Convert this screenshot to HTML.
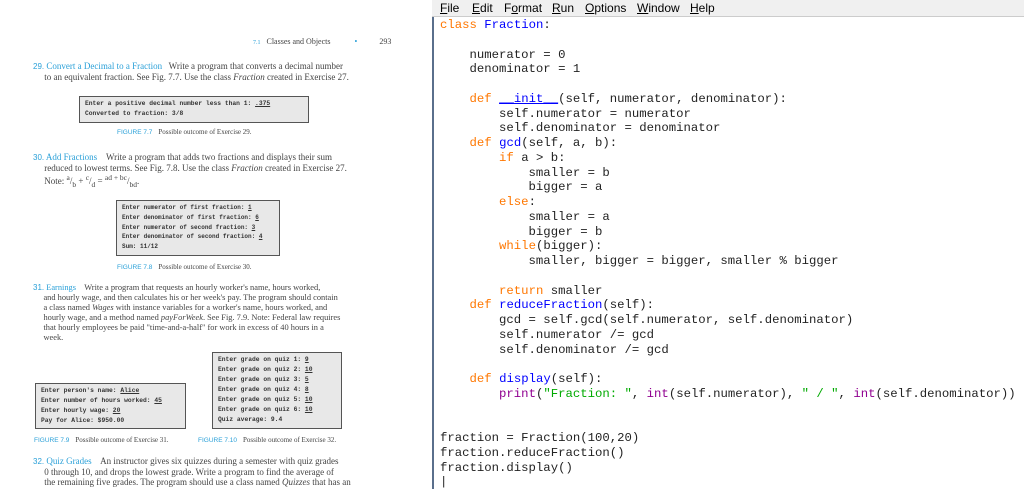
<!DOCTYPE html>
<html><head><meta charset="utf-8"><style>
*{margin:0;padding:0;box-sizing:border-box}
body{width:1024px;height:489px;background:#fff;position:relative;overflow:hidden;font-family:"Liberation Serif",serif;color:#333}
.a{position:absolute;white-space:nowrap}
.sr{font-family:"Liberation Serif",serif;font-size:9px;color:#444}
.bl{color:#2aa0d8}
.box{position:absolute;background:#e8e8e8;border:1.5px solid #555;font-family:"Liberation Mono",monospace;font-size:6.3px;font-weight:bold;color:#333;line-height:10px;padding:2px 5px;white-space:nowrap;overflow:hidden}
.box u{text-decoration:underline}
.cap{font-size:7px;color:#444}
.cap b{color:#2aa0d8;font-family:"Liberation Sans",sans-serif;font-weight:normal;font-size:6.5px;margin-right:6px}
#menu{position:absolute;left:432px;top:0;width:592px;height:17px;background:#f0f0f0;border-bottom:1px solid #ccc;font-family:"Liberation Sans",sans-serif;font-size:12px;color:#000}
#menu span{position:absolute;top:1px}
#ed{position:absolute;left:432px;top:17px;width:592px;height:472px;border-left:2px solid #5a6f8c;background:#fff}
#code{position:absolute;left:440px;top:18px;font-family:"Liberation Mono",monospace;font-size:12.3px;line-height:14.75px;color:#222;white-space:pre}
.k{color:#ff7700}.f{color:#0000ff}.s{color:#00aa00}.p{color:#900090}
</style></head><body>
<div class="a sr" style="left:253px;top:37px;font-size:8px"><span class="bl" style="font-size:6px">7.1</span>&nbsp;&nbsp; Classes and Objects &nbsp;&nbsp;&nbsp;&nbsp;&nbsp;&nbsp;&nbsp;&nbsp;&nbsp;&nbsp;&nbsp;<span class="bl">•</span>&nbsp;&nbsp;&nbsp;&nbsp;&nbsp;&nbsp;&nbsp;&nbsp;&nbsp;&nbsp; 293</div>
<div class="a sr" style="left:33px;top:61px;line-height:10px"><span class="bl"><span style="font-family:'Liberation Sans';font-size:8px">29.</span> Convert a Decimal to a Fraction</span>&nbsp;&nbsp; Write a program that converts a decimal number<br>&nbsp;&nbsp;&nbsp;&nbsp;&nbsp;to an equivalent fraction. See Fig. 7.7. Use the class <i>Fraction</i> created in Exercise 27.</div>
<div class="box" style="left:79px;top:96px;width:230px;height:27px">Enter a positive decimal number less than 1: <u>.375</u><br>Converted to fraction: 3/8</div>
<div class="a cap" style="left:117px;top:128px"><b>FIGURE 7.7</b>Possible outcome of Exercise 29.</div>
<div class="a sr" style="left:33px;top:152px;line-height:10px"><span class="bl"><span style="font-family:'Liberation Sans';font-size:8px">30.</span> Add Fractions</span>&nbsp;&nbsp;&nbsp; Write a program that adds two fractions and displays their sum<br>&nbsp;&nbsp;&nbsp;&nbsp;&nbsp;reduced to lowest terms. See Fig. 7.8. Use the class <i>Fraction</i> created in Exercise 27.<br>&nbsp;&nbsp;&nbsp;&nbsp;&nbsp;Note: <sup>a</sup>/<sub>b</sub> + <sup>c</sup>/<sub>d</sub> = <sup>ad + bc</sup>/<sub>bd</sub>.</div>
<div class="box" style="left:116px;top:200px;width:164px;height:56px;line-height:9.8px;font-size:6px">Enter numerator of first fraction: <u>1</u><br>Enter denominator of first fraction: <u>6</u><br>Enter numerator of second fraction: <u>3</u><br>Enter denominator of second fraction: <u>4</u><br>Sum: 11/12</div>
<div class="a cap" style="left:117px;top:263px"><b>FIGURE 7.8</b>Possible outcome of Exercise 30.</div>
<div class="a sr" style="left:33px;top:283px;line-height:10px;font-size:8.4px"><span class="bl"><span style="font-family:'Liberation Sans';font-size:8px">31.</span> Earnings</span>&nbsp;&nbsp;&nbsp; Write a program that requests an hourly worker's name, hours worked,<br>&nbsp;&nbsp;&nbsp;&nbsp;&nbsp;and hourly wage, and then calculates his or her week's pay. The program should contain<br>&nbsp;&nbsp;&nbsp;&nbsp;&nbsp;a class named <i>Wages</i> with instance variables for a worker's name, hours worked, and<br>&nbsp;&nbsp;&nbsp;&nbsp;&nbsp;hourly wage, and a method named <i>payForWeek</i>. See Fig. 7.9. Note: Federal law requires<br>&nbsp;&nbsp;&nbsp;&nbsp;&nbsp;that hourly employees be paid "time-and-a-half" for work in excess of 40 hours in a<br>&nbsp;&nbsp;&nbsp;&nbsp;&nbsp;week.</div>
<div class="box" style="left:35px;top:383px;width:151px;height:46px">Enter person's name: <u>Alice</u><br>Enter number of hours worked: <u>45</u><br>Enter hourly wage: <u>20</u><br>Pay for Alice: $950.00</div>
<div class="box" style="left:212px;top:352px;width:130px;height:77px">Enter grade on quiz 1: <u>9</u><br>Enter grade on quiz 2: <u>10</u><br>Enter grade on quiz 3: <u>5</u><br>Enter grade on quiz 4: <u>8</u><br>Enter grade on quiz 5: <u>10</u><br>Enter grade on quiz 6: <u>10</u><br>Quiz average: 9.4</div>
<div class="a cap" style="left:34px;top:436px"><b>FIGURE 7.9</b>Possible outcome of Exercise 31.</div>
<div class="a cap" style="left:198px;top:436px"><b>FIGURE 7.10</b>Possible outcome of Exercise 32.</div>
<div class="a sr" style="left:33px;top:456px;line-height:10px"><span class="bl"><span style="font-family:'Liberation Sans';font-size:8px">32.</span> Quiz Grades</span>&nbsp;&nbsp;&nbsp; An instructor gives six quizzes during a semester with quiz grades<br>&nbsp;&nbsp;&nbsp;&nbsp;&nbsp;0 through 10, and drops the lowest grade. Write a program to find the average of<br>&nbsp;&nbsp;&nbsp;&nbsp;&nbsp;the remaining five grades. The program should use a class named <i>Quizzes</i> that has an</div>

<div id="menu"><span style="left:8px"><u>F</u>ile</span><span style="left:40px"><u>E</u>dit</span><span style="left:72px">F<u>o</u>rmat</span><span style="left:120px"><u>R</u>un</span><span style="left:153px"><u>O</u>ptions</span><span style="left:205px"><u>W</u>indow</span><span style="left:258px"><u>H</u>elp</span></div>
<div id="ed"></div>
<div id="code"><span class="k">class</span> <span class="f">Fraction</span>:

    numerator = 0
    denominator = 1

    <span class="k">def</span> <span class="f"><u>__init__</u></span>(self, numerator, denominator):
        self.numerator = numerator
        self.denominator = denominator
    <span class="k">def</span> <span class="f">gcd</span>(self, a, b):
        <span class="k">if</span> a &gt; b:
            smaller = b
            bigger = a
        <span class="k">else</span>:
            smaller = a
            bigger = b
        <span class="k">while</span>(bigger):
            smaller, bigger = bigger, smaller % bigger

        <span class="k">return</span> smaller
    <span class="k">def</span> <span class="f">reduceFraction</span>(self):
        gcd = self.gcd(self.numerator, self.denominator)
        self.numerator /= gcd
        self.denominator /= gcd

    <span class="k">def</span> <span class="f">display</span>(self):
        <span class="p">print</span>(<span class="s">"Fraction: "</span>, <span class="p">int</span>(self.numerator), <span class="s">" / "</span>, <span class="p">int</span>(self.denominator))


fraction = Fraction(100,20)
fraction.reduceFraction()
fraction.display()
|</div>
</body></html>
